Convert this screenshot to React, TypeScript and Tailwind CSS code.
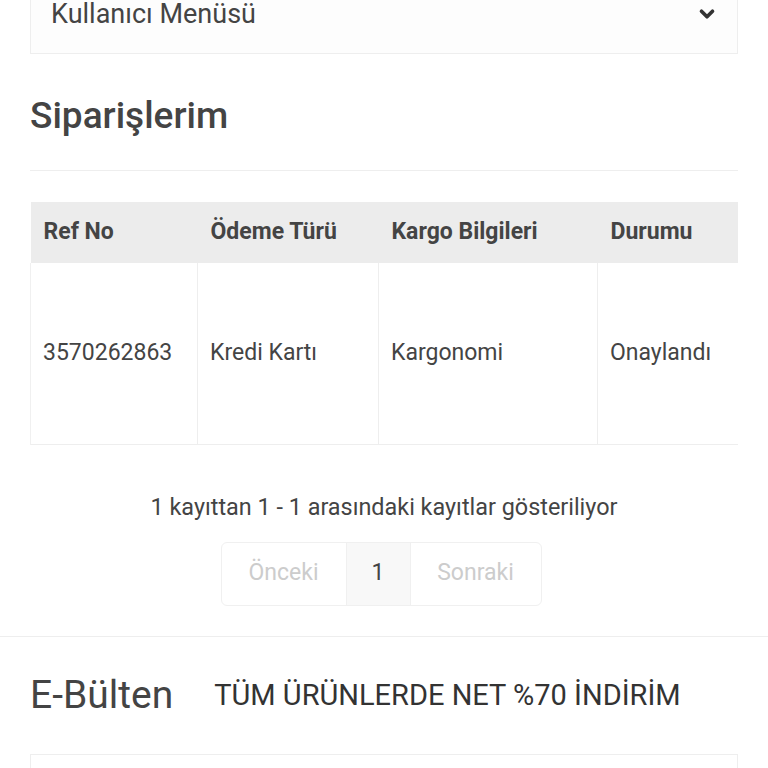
import { ChevronDown } from "lucide-react";

const orders = [
  { ref: "3570262863", payment: "Kredi Kartı", cargo: "Kargonomi", status: "Onaylandı" },
];

export default function App() {
  return (
    <div className="w-[768px] h-[768px] overflow-hidden bg-white text-[#444] font-['Roboto',sans-serif]">
      <div className="px-[30px]">
        <div className="flex h-[54px] items-start justify-between border border-t-0 border-[#eeeeee] bg-[#fdfdfd] pl-[20px] pr-[19px]">
          <span className="text-[27px] leading-[28px] text-[#444]">Kullanıcı Menüsü</span>
          <ChevronDown className="mt-[3px] h-[22px] w-[22px] text-[#333]" strokeWidth={4} />
        </div>

        <h2 className="pt-[40px] text-[37px] font-medium leading-[44px] text-[#444]">Siparişlerim</h2>
        <div className="mt-[32px] border-b border-[#eeeeee]" />

        <div className="mt-[31px] w-[708px] overflow-hidden">
          <table className="w-[760px] table-fixed border-collapse text-[23px]">
            <colgroup>
              <col className="w-[167px]" />
              <col className="w-[181px]" />
              <col className="w-[219px]" />
              <col className="w-[193px]" />
            </colgroup>
            <thead>
              <tr className="h-[61px] bg-[#ececec] text-left">
                <th className="px-[13px] font-bold text-[#444]">Ref No</th>
                <th className="px-[13px] font-bold text-[#444]">Ödeme Türü</th>
                <th className="px-[13px] font-bold text-[#444]">Kargo Bilgileri</th>
                <th className="px-[13px] font-bold text-[#444]">Durumu</th>
              </tr>
            </thead>
            <tbody>
              {orders.map((o) => (
                <tr key={o.ref} className="h-[181px] border-b border-[#eeeeee]">
                  <td className="border-l border-[#f0f0f0] px-[12px]">{o.ref}</td>
                  <td className="border-l border-[#eeeeee] px-[12px]">{o.payment}</td>
                  <td className="border-l border-[#eeeeee] px-[12px]">{o.cargo}</td>
                  <td className="border-l border-[#eeeeee] px-[12px]">{o.status}</td>
                </tr>
              ))}
            </tbody>
          </table>
        </div>

        <p className="mt-[48px] text-center text-[23.4px] leading-[28px] text-[#444]">
          1 kayıttan 1 - 1 arasındaki kayıtlar gösteriliyor
        </p>

        <div className="mt-[21px] flex justify-center pr-[6px]">
          <div className="flex h-[64px] overflow-hidden rounded-[6px] border border-[#f0f0f0] text-[23px]">
            <span className="flex w-[124px] items-center justify-center text-[#cccccc]">Önceki</span>
            <span className="flex w-[65px] items-center justify-center border-x border-[#f0f0f0] bg-[#f8f8f8] text-[#444]">1</span>
            <span className="flex w-[130px] items-center justify-center text-[#cccccc]">Sonraki</span>
          </div>
        </div>
      </div>

      <div className="mt-[30px] border-t border-[#eeeeee] px-[30px]">
        <div className="flex h-[117px] items-center gap-[41px]">
          <span className="text-[39px] leading-none text-[#444]">E-Bülten</span>
          <span className="text-[29px] leading-none text-[#333]">TÜM ÜRÜNLERDE NET %70 İNDİRİM</span>
        </div>
        <div className="h-[40px] border border-b-0 border-[#eeeeee]" />
      </div>
    </div>
  );
}
